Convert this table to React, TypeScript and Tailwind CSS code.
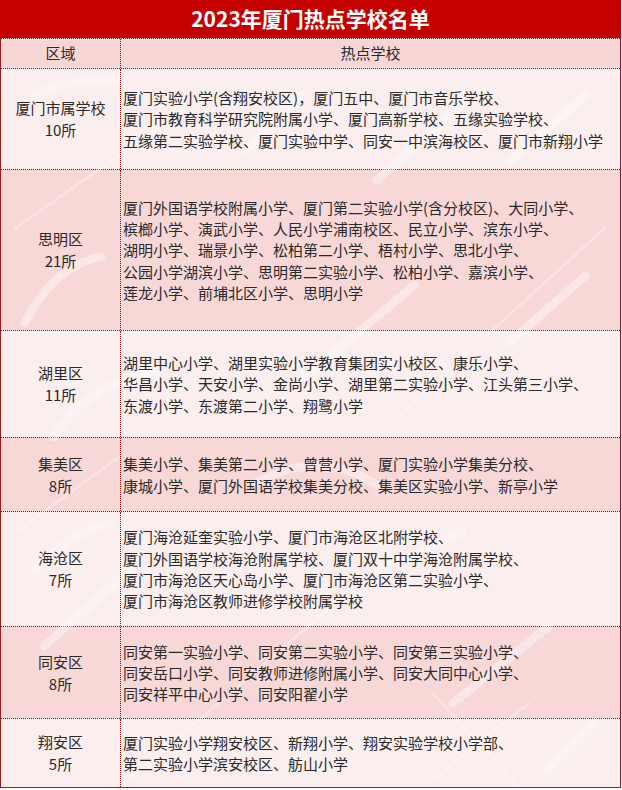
import React from "react";

type Row = { area: string; count: string; lines: string[]; h: string; pink: boolean };

const rows: Row[] = [
  {
    area: "厦门市属学校",
    count: "10所",
    h: "h-[101px]",
    pink: false,
    lines: [
      "厦门实验小学(含翔安校区)，厦门五中、厦门市音乐学校、",
      "厦门市教育科学研究院附属小学、厦门高新学校、五缘实验学校、",
      "五缘第二实验学校、厦门实验中学、同安一中滨海校区、厦门市新翔小学",
    ],
  },
  {
    area: "思明区",
    count: "21所",
    h: "h-[161px]",
    pink: true,
    lines: [
      "厦门外国语学校附属小学、厦门第二实验小学(含分校区)、大同小学、",
      "槟榔小学、演武小学、人民小学浦南校区、民立小学、滨东小学、",
      "湖明小学、瑞景小学、松柏第二小学、梧村小学、思北小学、",
      "公园小学湖滨小学、思明第二实验小学、松柏小学、嘉滨小学、",
      "莲龙小学、前埔北区小学、思明小学",
    ],
  },
  {
    area: "湖里区",
    count: "11所",
    h: "h-[107px]",
    pink: false,
    lines: [
      "湖里中心小学、湖里实验小学教育集团实小校区、康乐小学、",
      "华昌小学、天安小学、金尚小学、湖里第二实验小学、江头第三小学、",
      "东渡小学、东渡第二小学、翔鹭小学",
    ],
  },
  {
    area: "集美区",
    count: "8所",
    h: "h-[74px]",
    pink: true,
    lines: [
      "集美小学、集美第二小学、曾营小学、厦门实验小学集美分校、",
      "康城小学、厦门外国语学校集美分校、集美区实验小学、新亭小学",
    ],
  },
  {
    area: "海沧区",
    count: "7所",
    h: "h-[115px]",
    pink: false,
    lines: [
      "厦门海沧延奎实验小学、厦门市海沧区北附学校、",
      "厦门外国语学校海沧附属学校、厦门双十中学海沧附属学校、",
      "厦门市海沧区天心岛小学、厦门市海沧区第二实验小学、",
      "厦门市海沧区教师进修学校附属学校",
    ],
  },
  {
    area: "同安区",
    count: "8所",
    h: "h-[92px]",
    pink: true,
    lines: [
      "同安第一实验小学、同安第二实验小学、同安第三实验小学、",
      "同安岳口小学、同安教师进修附属小学、同安大同中心小学、",
      "同安祥平中心小学、同安阳翟小学",
    ],
  },
  {
    area: "翔安区",
    count: "5所",
    h: "h-[69px]",
    pink: false,
    lines: ["厦门实验小学翔安校区、新翔小学、翔安实验学校小学部、", "第二实验小学滨安校区、舫山小学"],
  },
];

function Watermark() {
  return (
    <svg
      className="pointer-events-none absolute inset-0 z-0 h-full w-full"
      viewBox="0 0 621 788"
      fill="none"
      stroke="white"
      strokeLinecap="round"
    >
      <g opacity="0.4" strokeWidth="9">
        <path d="M20 60 Q 60 40 110 45" />
        <path d="M240 120 L 300 60" />
        <path d="M380 150 L 470 70" />
        <path d="M520 130 L 600 60" />
        <path d="M10 300 Q 40 240 90 230" />
        <path d="M40 420 Q 80 360 150 350" />
        <path d="M300 360 L 420 260" />
        <path d="M520 320 L 600 250" />
        <path d="M250 470 Q 320 430 380 470" />
        <path d="M20 560 Q 60 520 100 510" />
        <path d="M30 640 L 120 560" />
        <path d="M380 560 L 470 520" />
        <path d="M460 700 L 560 620" />
        <path d="M560 770 L 610 720" />
      </g>
      <g opacity="0.3" strokeWidth="3">
        <path d="M0 200 L 200 60" />
        <path d="M400 400 L 620 200" />
        <path d="M120 780 L 330 600" />
        <path d="M440 780 L 540 700" />
        <path d="M0 520 L 110 440" />
        <path d="M530 788 L 440 690" />
      </g>
    </svg>
  );
}

export default function App() {
  return (
    <div
      className="w-[621px] bg-white text-[15px] text-[#2a2a2a]"
      style={{ fontFamily: '"Noto Sans CJK SC", "Noto Sans", sans-serif' }}
    >
      <div className="flex h-[38px] items-center justify-center bg-[#c40000] text-[21px] font-bold text-white">
        2023年厦门热点学校名单
      </div>
      <div className="relative border-b border-l border-r border-[#a11a1a]">
        <div className="flex h-[30px] border-t border-dotted border-[#a00000] bg-[#f9d6d6]">
          <div className="relative z-10 flex w-[120px] items-center justify-center border-r border-dotted border-[#a00000]">
            区域
          </div>
          <div className="relative z-10 flex flex-1 items-center justify-center">热点学校</div>
        </div>
        {rows.map((r) => (
          <div
            key={r.area}
            className={`flex ${r.h} border-t border-dotted border-[#a00000] ${r.pink ? "bg-[#f8d7d7]" : "bg-[#fbeeee]"}`}
          >
            <div className="relative z-10 flex w-[120px] flex-col items-center justify-center border-r border-dotted border-[#a00000] leading-[22px]">
              <div>{r.area}</div>
              <div>{r.count}</div>
            </div>
            <div className="relative z-10 flex flex-1 flex-col justify-center pl-[2px] leading-[21.3px] whitespace-nowrap">
              {r.lines.map((l, i) => (
                <div key={i}>{l}</div>
              ))}
            </div>
          </div>
        ))}
        <Watermark />
      </div>
    </div>
  );
}
